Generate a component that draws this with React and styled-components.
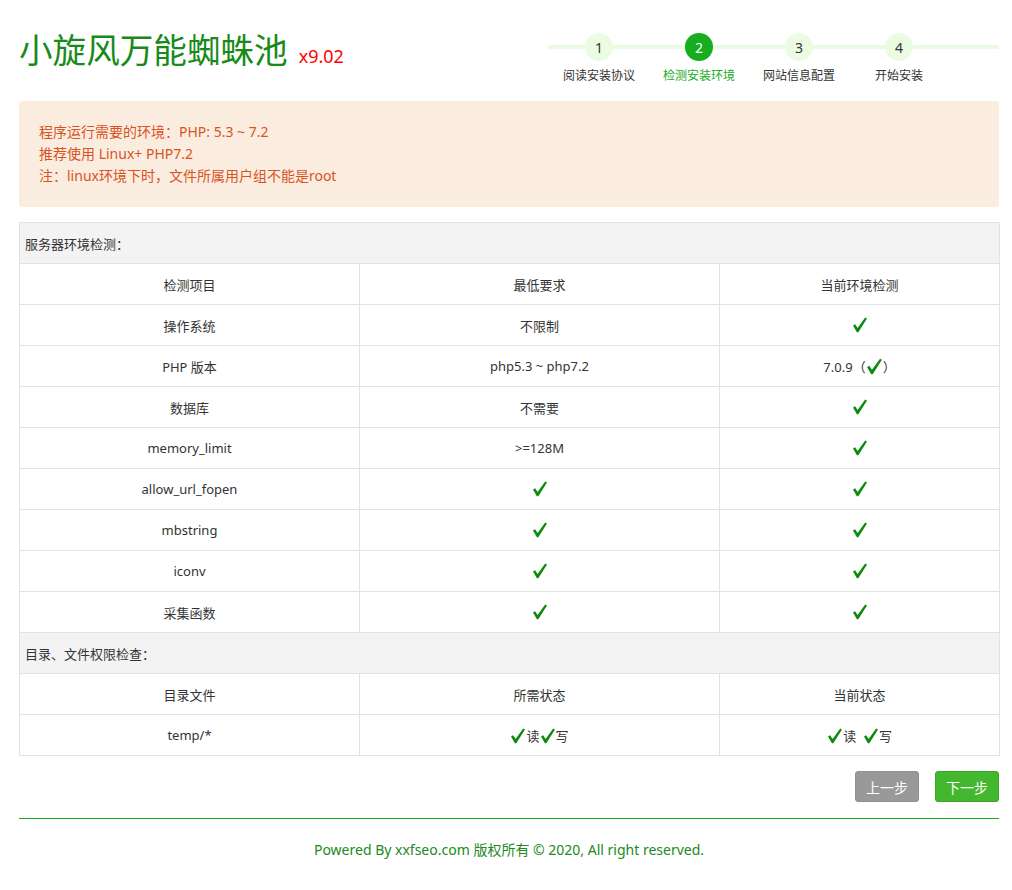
import React from "react";
import styled, { createGlobalStyle } from "styled-components";

const Global = createGlobalStyle`
  html, body { margin: 0; padding: 0; background: #fff; }
  body {
    font-family: "Noto Sans", "Noto Sans CJK SC", sans-serif;
    color: #333;
  }
`;

const Page = styled.div`
  width: 980px;
  margin-left: 19px;
`;

const Header = styled.header`
  display: flex;
  justify-content: space-between;
  align-items: flex-start;
  height: 101px;
`;

const Title = styled.h1`
  margin: 27px 0 0 0;
  font-family: "Noto Sans CJK SC", sans-serif;
  font-weight: 400;
  font-size: 33.6px;
  line-height: 44px;
  color: #178a17;
  display: flex;
  align-items: baseline;
`;

const Version = styled.span`
  font-family: "Noto Sans", "Noto Sans CJK SC", sans-serif;
  font-size: 18px;
  color: #f00;
  margin-left: 11px;
`;

const Steps = styled.ol`
  list-style: none;
  margin: 33px 0 0 0;
  padding: 0 0 0 1px;
  width: 450px;
  display: flex;
  background: linear-gradient(#ebfbe2, #ebfbe2) no-repeat 0 12px / 100% 4px;
`;

const Step = styled.li`
  width: 100px;
  display: flex;
  flex-direction: column;
  align-items: center;
`;

const Dot = styled.span`
  width: 28px;
  height: 28px;
  border-radius: 50%;
  display: flex;
  align-items: center;
  justify-content: center;
  font-size: 14px;
  background: ${(p) => (p.$active ? "#16ad1f" : "#ebfce3")};
  color: ${(p) => (p.$active ? "#fff" : "#333")};
`;

const StepLabel = styled.span`
  margin-top: 5px;
  font-size: 12px;
  line-height: 18px;
  font-family: "Noto Sans CJK SC", sans-serif;
  color: ${(p) => (p.$active ? "#16ad1f" : "#333")};
`;

const Alert = styled.div`
  background: #faede0;
  border-radius: 3px;
  padding: 20px 20px 20px;
  font-size: 14px;
  line-height: 22px;
  color: #d9531e;
`;

const Table = styled.table`
  margin-top: 15px;
  width: 980px;
  border-collapse: collapse;
  table-layout: fixed;
  font-size: 13px;
  color: #333;
`;

const Section = styled.td`
  background: #f3f3f3;
  border: 1px solid #e2e2e2;
  height: 41px;
  padding: 0 5px;
  text-align: left;
  box-sizing: border-box;
`;

const Cell = styled.td`
  border: 1px solid #e2e2e2;
  height: 41px;
  padding: 0;
  text-align: center;
  vertical-align: middle;
  box-sizing: border-box;
`;

const Ok = styled.svg`
  width: ${(p) => p.$size || 16}px;
  height: ${(p) => p.$size || 16}px;
  vertical-align: -3px;
  fill: #0b8a0b;
`;

const Check = ({ size }) => (
  <Ok $size={size} viewBox="0 0 16 16">
    <path d="M1 8.6 L3.1 7.2 L5.6 11 L13.2 0.6 L15 1.6 L6.3 15.2 L4.9 15.2 Z" />
  </Ok>
);

const Actions = styled.div`
  margin-top: 15px;
  display: flex;
  justify-content: flex-end;
  gap: 16px;
`;

const Button = styled.button`
  width: 64px;
  height: 31px;
  border-radius: 3px;
  border: 1px solid ${(p) => (p.$primary ? "#3aa328" : "#8f8f8f")};
  background: ${(p) => (p.$primary ? "#43b72e" : "#999")};
  color: #fff;
  font-family: "Noto Sans CJK SC", sans-serif;
  font-size: 14px;
  padding: 0;
  cursor: pointer;
`;

const Divider = styled.div`
  margin-top: 16px;
  height: 1px;
  background: #16ad1f;
`;

const Footer = styled.footer`
  padding-top: 20px;
  text-align: center;
  font-size: 14px;
  line-height: 22px;
  color: #208a20;
`;

const steps = ["阅读安装协议", "检测安装环境", "网站信息配置", "开始安装"];

const envRows = [
  ["操作系统", "不限制", <Check />],
  ["PHP 版本", "php5.3 ~ php7.2", <>7.0.9（<Check size={17} />）</>],
  ["数据库", "不需要", <Check />],
  ["memory_limit", ">=128M", <Check />],
  ["allow_url_fopen", <Check />, <Check />],
  ["mbstring", <Check />, <Check />],
  ["iconv", <Check />, <Check />],
  ["采集函数", <Check />, <Check />],
];

export default function App() {
  return (
    <Page>
      <Global />
      <Header>
        <Title>
          小旋风万能蜘蛛池<Version>x9.02</Version>
        </Title>
        <Steps>
          {steps.map((s, i) => (
            <Step key={s}>
              <Dot $active={i === 1}>{i + 1}</Dot>
              <StepLabel $active={i === 1}>{s}</StepLabel>
            </Step>
          ))}
        </Steps>
      </Header>
      <Alert>
        <div>程序运行需要的环境：PHP: 5.3 ~ 7.2</div>
        <div>推荐使用 Linux+ PHP7.2</div>
        <div>注：linux环境下时，文件所属用户组不能是root</div>
      </Alert>
      <Table>
        <colgroup>
          <col style={{ width: 340 }} />
          <col style={{ width: 360 }} />
          <col style={{ width: 280 }} />
        </colgroup>
        <tbody>
          <tr>
            <Section colSpan={3}>服务器环境检测：</Section>
          </tr>
          <tr>
            <Cell>检测项目</Cell>
            <Cell>最低要求</Cell>
            <Cell>当前环境检测</Cell>
          </tr>
          {envRows.map((r, i) => (
            <tr key={i}>
              <Cell>{r[0]}</Cell>
              <Cell>{r[1]}</Cell>
              <Cell>{r[2]}</Cell>
            </tr>
          ))}
          <tr>
            <Section colSpan={3}>目录、文件权限检查：</Section>
          </tr>
          <tr>
            <Cell>目录文件</Cell>
            <Cell>所需状态</Cell>
            <Cell>当前状态</Cell>
          </tr>
          <tr>
            <Cell>temp/*</Cell>
            <Cell>
              <Check />读<Check />写
            </Cell>
            <Cell>
              <Check />读&nbsp; <Check />写
            </Cell>
          </tr>
        </tbody>
      </Table>
      <Actions>
        <Button>上一步</Button>
        <Button $primary>下一步</Button>
      </Actions>
      <Divider />
      <Footer>Powered By xxfseo.com 版权所有 © 2020, All right reserved.</Footer>
    </Page>
  );
}
